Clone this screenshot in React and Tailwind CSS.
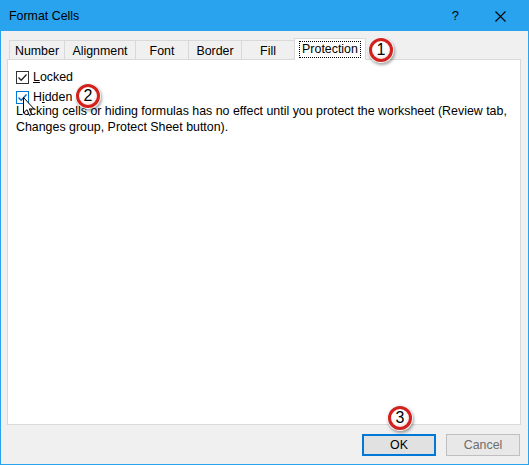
import React from "react";

const FONT = { fontFamily: '"Liberation Sans", Arial, sans-serif' };

// Red numbered callout used in the tutorial screenshot
const Badge = ({ n, className }) => (
  <div
    className={`absolute flex h-[24px] w-[24px] items-center justify-center rounded-full border-[3px] border-[#d3211d] text-[16px] text-black shadow-[0_0_0_1px_#f4f4f4,1px_2px_3px_1px_rgba(0,0,0,0.35)] ${className}`}
    style={{ background: "radial-gradient(circle at 45% 40%, #ffffff 0%, #ffffff 45%, #fbe3e3 75%, #f2b8b8 100%)" }}
  >
    <span className="leading-none">{n}</span>
  </div>
);

const Check = ({ blue }) => (
  <div className={`flex h-[13px] w-[13px] shrink-0 items-center justify-center border bg-white ${blue ? "border-[#0078d7]" : "border-[#333333]"}`}>
    <svg width="11" height="11" viewBox="0 0 11 11">
      <path d="M1.5 5.5 L4.2 8.2 L9.5 2.5" fill="none" stroke={blue ? "#0a5fb4" : "#222"} strokeWidth="1.3" />
    </svg>
  </div>
);

const tabs = ["Number", "Alignment", "Font", "Border", "Fill"];
const tabW = [55, 71, 53, 53, 53];

export default function App() {
  return (
    <div className="relative flex h-[465px] w-[529px] flex-col bg-[#f0f0f0] text-[12.4px] text-black" style={FONT}>
      {/* title bar */}
      <div className="flex h-[31px] shrink-0 items-center bg-[#2aa3ef] pl-[9px] pr-[23px] pt-[1px]">
        <span className="flex-1">Format Cells</span>
        <span className="mr-[36px] text-[13px]">?</span>
        <svg width="11" height="11" viewBox="0 0 11 11">
          <path d="M0.5 0.5 L10.5 10.5 M10.5 0.5 L0.5 10.5" stroke="#000" strokeWidth="1.1" />
        </svg>
      </div>

      <div className="flex flex-1 flex-col border-x border-b border-[#2aa3ef] pl-[6px] pr-[7px] pt-[7px]">
        {/* tab strip */}
        <div className="relative z-10 flex h-[21px] items-end pl-[2px]">
          {tabs.map((t, i) => (
            <div
              key={t}
              style={{ width: tabW[i] }}
              className="flex h-[19px] items-center justify-center border-l border-t border-[#d9d9d9] bg-[#f0f0f0] pt-[2px] last:border-r"
            >
              {t}
            </div>
          ))}
          <div className="-mb-px flex h-[22px] w-[72px] items-start justify-center border-x border-t border-[#d9d9d9] bg-white pt-[2px]">
            <span className="border border-dotted border-black px-[2px] leading-[15px]">Protection</span>
          </div>
        </div>

        {/* panel */}
        <div className="h-[366px] border border-[#d9d9d9] bg-white px-[8px] pt-[11px]">
          <label className="flex h-[13px] items-center gap-[4px] leading-[13px]">
            <Check />
            <span>
              <u>L</u>ocked
            </span>
          </label>
          <label className="mt-[7px] flex h-[13px] items-center gap-[4px] leading-[13px]">
            <Check blue />
            <span>
              H<u>i</u>dden
            </span>
          </label>
          <p className="mt-[-1px] leading-[16px]">
            Locking cells or hiding formulas has no effect until you protect the worksheet (Review tab,
            <br />
            Changes group, Protect Sheet button).
          </p>
        </div>

        {/* buttons */}
        <div className="mt-[9px] flex justify-end gap-[10px] pr-[1px]">
          <button className="h-[22px] w-[74px] border-2 border-[#0078d7] bg-[#e1e1e1]">OK</button>
          <button className="h-[22px] w-[74px] border border-[#bfbfbf] bg-[#e8e8e8] text-[#6d6d6d]">Cancel</button>
        </div>
      </div>

      {/* callouts */}
      <Badge n="1" className="left-[369px] top-[38px]" />
      <Badge n="2" className="left-[76px] top-[84px]" />
      <Badge n="3" className="left-[388px] top-[406px]" />

      {/* mouse pointer */}
      <svg className="absolute left-[23px] top-[97px]" width="12" height="20" viewBox="0 0 12 20">
        <path d="M0.5 0.5 L0.5 16 L4 12.7 L6.4 18.4 L8.6 17.4 L6.3 11.9 L11 11.9 Z" fill="#fff" stroke="#000" strokeWidth="1" />
      </svg>
    </div>
  );
}
